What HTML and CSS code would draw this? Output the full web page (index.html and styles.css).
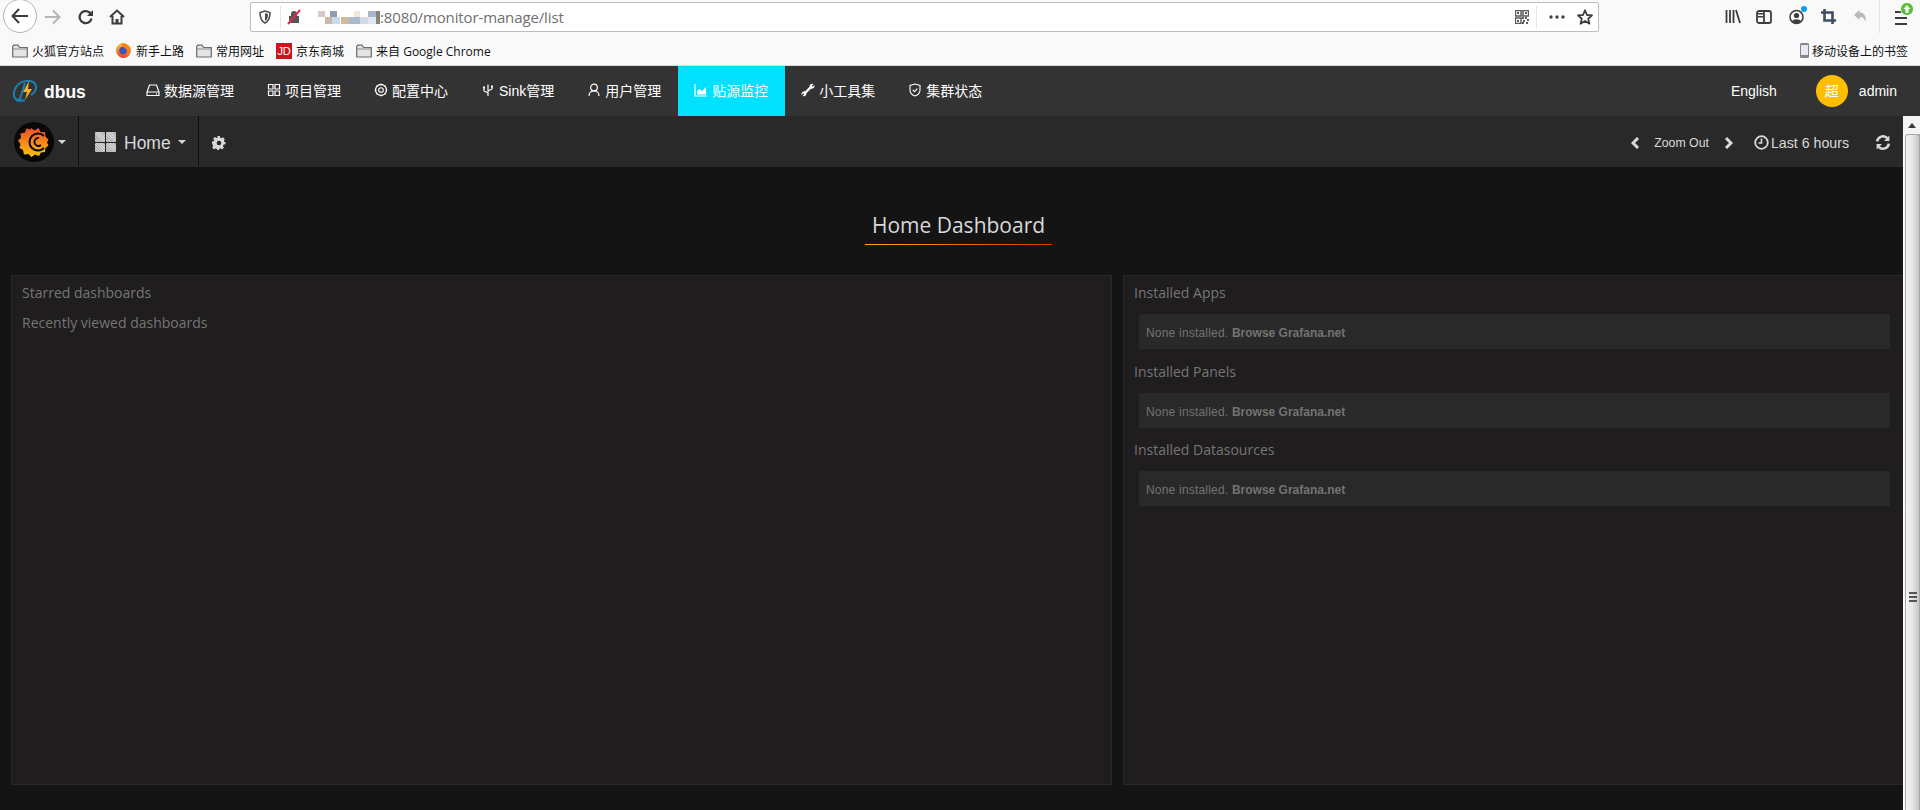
FILE: index.html
```html
<!DOCTYPE html>
<html lang="zh">
<head>
<meta charset="utf-8">
<title>dbus</title>
<link rel="stylesheet" href="styles.css">
</head>
<body>
<header class="chrome">
  <div class="toolbar">
    <button class="back"><svg width="18" height="16" viewBox="0 0 18 16"><path d="M8 1 1.500 8 8 15M2 8h15" fill="none" stroke="#3d3d3f" stroke-width="2"/></svg></button>
    <svg class="forward" width="17" height="16" viewBox="0 0 17 16"><path d="M9 1.500 15.500 8 9 14.500M15 8H1" fill="none" stroke="#b5b5b7" stroke-width="2"/></svg>
    <svg class="reload" width="16" height="16" viewBox="0 0 16 16"><path d="M13.500 9.500A6 6 0 1 1 11.500 3.500L14 5.500" fill="none" stroke="#3d3d3f" stroke-width="2.300"/><path d="M15 1v6H9z" fill="#3d3d3f"/></svg>
    <svg class="home" width="16" height="16" viewBox="0 0 16 16"><path d="M1 8 8 1.500 15 8M3.500 7v7.500h9V7" fill="none" stroke="#3d3d3f" stroke-width="2"/><path d="M6.500 10h3v5h-3z" fill="#3d3d3f"/></svg>
    <div class="urlbar">
      <svg class="shield" width="12" height="14" viewBox="0 0 12 14"><path d="M6 1 1 2.500C1 8 2 11 6 13c4-2 5-5 5-10.500z" fill="none" stroke="#505052" stroke-width="1.600"/><path d="M6 3v8c2-1 3-3 3-7z" fill="#505052"/></svg>
      <span class="url-div"></span>
      <svg class="lock" width="14" height="16" viewBox="0 0 14 16"><path d="M4 7V5a3 3 0 0 1 6 0v2h2v7H2V7z" fill="#555"/><path d="M1 15 13 1" stroke="#e22850" stroke-width="2"/></svg>
      <svg class="mosaic" width="62" height="13" viewBox="0 0 62 13"><rect width="7" height="6" fill="#d9c9c0"/><rect x="7" y="6" width="7" height="7" fill="#c9b8ab"/><rect x="12" width="7" height="6" fill="#8f9fb3"/><rect x="14" y="6" width="8" height="7" fill="#c6dde8"/><rect x="23" y="6" width="8" height="7" fill="#d2b9a0"/><rect x="31" y="6" width="11" height="7" fill="#a9bad0"/><rect x="36" width="6" height="6" fill="#f1e6d3"/><rect x="42" y="6" width="8" height="7" fill="#d3dce4"/><rect x="50" width="8" height="6" fill="#a6b6cc"/><rect x="50" y="6" width="8" height="7" fill="#dfe7ee"/><rect x="58" width="4" height="13" fill="#8a8478"/></svg>
      <span class="url-text">:8080/monitor-manage/list</span>
      <svg class="qr" width="14" height="14" viewBox="0 0 14 14"><path d="M0 0h6v6H0zM8 0h6v6H8zM0 8h6v6H0z" fill="none" stroke="#5b5b5d" stroke-width="1.600" transform="translate(.4 .4) scale(.94)"/><path d="M2 2h2v2H2zM10 2h2v2h-2zM2 10h2v2H2zM7 7h2v2H7zM10 7h2v2h-2zM12 9h2v2h-2zM8 10h2v2H8zM11 12h2v2h-2zM7 12h2v2H7z" fill="#5b5b5d"/></svg>
      <span class="url-div url-div-right"></span>
      <svg class="dots" width="16" height="4" viewBox="0 0 16 4"><circle cx="2" cy="2" r="1.700" fill="#444"/><circle cx="8" cy="2" r="1.700" fill="#444"/><circle cx="14" cy="2" r="1.700" fill="#444"/></svg>
      <svg class="star" width="16" height="16" viewBox="0 0 16 16"><path d="M8 1.300 10 6l5 .4-3.800 3.300 1.200 5L8 12l-4.400 2.700 1.200-5L1 6.400 6 6z" fill="none" stroke="#3d3d3f" stroke-width="1.800" stroke-linejoin="round"/></svg>
    </div>
    <svg class="library" width="16" height="15" viewBox="0 0 16 15"><path d="M1.500 1v13M5 1v13M8.500 1v13M11 1l4 13" stroke="#3d3d3f" stroke-width="1.800" fill="none"/></svg>
    <svg class="sidebar" width="16" height="14" viewBox="0 0 16 14"><rect x="1" y="1" width="14" height="12" rx="2" fill="none" stroke="#3d3d3f" stroke-width="1.800"/><path d="M8 1v12" stroke="#3d3d3f" stroke-width="1.800"/><path d="M2 3h5v1.500H2zM2 6h5v1.500H2z" fill="#3d3d3f"/></svg>
    <span class="account"><svg width="15" height="16" viewBox="0 0 15 16"><circle cx="7.500" cy="8" r="6.500" fill="none" stroke="#3d3d3f" stroke-width="1.500"/><circle cx="7.500" cy="6.500" r="2.600" fill="#3d3d3f"/><path d="M3 12.500c1-3 8-3 9 0-2 2-7 2-9 0z" fill="#3d3d3f"/></svg><i class="blue-dot"></i></span>
    <svg class="crop" width="15" height="15" viewBox="0 0 15 15"><path d="M3.500 0v11.500H15M0 3.500h11.500V15" fill="none" stroke="#3f4d5e" stroke-width="2.600"/></svg>
    <svg class="undo" width="15" height="15" viewBox="0 0 15 15"><path d="M6.500 1 1 6l5.500 5V8c3 0 5 1 6 5 1-6-1-9-6-9.500z" fill="#b8b8ba"/></svg>
    <span class="tb-div"></span>
    <span class="burger"><i></i><i></i><i></i><svg class="upd" width="14" height="14" viewBox="0 0 14 14"><circle cx="7" cy="7" r="6.500" fill="#57bd35" stroke="#f9f9fa"/><path d="M7 3 3.500 7h2v4h3V7h2z" fill="#fff"/></svg></span>
  </div>
  <div class="bookmarks">
    <span class="bm bm-first"><svg class="folder" width="16" height="14" viewBox="0 0 16 14"><use href="#folder-shape"/></svg>火狐官方站点</span>
    <span class="bm"><svg width="15" height="15" viewBox="0 0 15 15"><defs><linearGradient id="ff" x1="0" y1="0" x2="0" y2="1"><stop offset="0" stop-color="#ffcb2e"/><stop offset="1" stop-color="#e8412a"/></linearGradient></defs><circle cx="7.500" cy="7.500" r="7.500" fill="url(#ff)"/><circle cx="7" cy="7.500" r="3.800" fill="#3a55b8"/><path d="M5 .8c3-1 8 1 9 5 .5 3-1 7-4 8 2-2 2-5 .6-6.800C9.500 5 7 5 5 .8z" fill="#f4801f"/></svg>新手上路</span>
    <span class="bm"><svg class="folder" width="16" height="14" viewBox="0 0 16 14"><use href="#folder-shape"/></svg>常用网址</span>
    <span class="bm"><span class="jd">JD</span>京东商城</span>
    <span class="bm"><svg class="folder" width="16" height="14" viewBox="0 0 16 14"><use href="#folder-shape"/></svg>来自 Google Chrome</span>
    <span class="bm bm-right"><svg width="9" height="15" viewBox="0 0 9 15"><rect width="9" height="15" rx="1.500" fill="#7f8791"/><rect x="1" y="2" width="7" height="10" fill="#e8eaee"/></svg>移动设备上的书签</span>
  </div>
  <svg class="defs" width="0" height="0"><defs><g id="folder-shape"><path d="M.7 2.500V13h14.600V3.500H7.500L6 1.200H1.500z" fill="#e4e4e4" stroke="#6c6c6e" stroke-width="1.200"/><path d="M1 5h14" stroke="#8d8d8f"/></g></defs></svg>
</header>

<nav class="appbar">
  <div class="brand">
    <svg width="24" height="22" viewBox="0 0 24 22"><path d="M9 20.500C3 21 0 18 1 12 2 6 7 1.500 13 1c5-.5 9 1 10 5 .6 4-2 7-5 9" fill="none" stroke="#1b7fb4" stroke-width="2"/><path d="M12 3 7 19l-4 1.500h9" fill="none" stroke="#1b7fb4" stroke-width="2"/><path d="M16 1 10 12h4l-2 8 7-11h-4z" fill="#f2b322"/></svg>
    <span class="brand-name">dbus</span>
  </div>
  <a class="menu-item"><svg width="14" height="14" viewBox="0 0 14 14"><path d="M3.500 2h7l2.500 7v3.500H1V9zM1 9h12M10 10.800h1" fill="none" stroke="#fff" stroke-width="1.200"/></svg>数据源管理</a>
  <a class="menu-item"><svg width="14" height="14" viewBox="0 0 14 14"><path d="M1.500 1.500h4.500v4.500H1.500zM8 1.500h4.500v4.500H8zM1.500 8h4.500v4.500H1.500zM8 8h4.500v4.500H8z" fill="none" stroke="#fff" stroke-width="1.200"/></svg>项目管理</a>
  <a class="menu-item"><svg width="14" height="14" viewBox="0 0 14 14"><circle cx="7" cy="7" r="2.300" fill="none" stroke="#fff" stroke-width="1.100"/><circle cx="7" cy="7" r="5.500" fill="none" stroke="#fff" stroke-width="1.300"/><path d="M7 .8v1.500M7 11.700v1.500M.8 7h1.500M11.700 7h1.500M2.600 2.600l1 1M10.400 10.400l1 1M2.600 11.400l1-1M10.400 3.600l1-1" stroke="#fff"/></svg>配置中心</a>
  <a class="menu-item"><svg width="14" height="14" viewBox="0 0 14 14"><path d="M7 13V1.500M7 10 3 8V5M7 8l4-2V4" fill="none" stroke="#fff" stroke-width="1.200"/><path d="M2 3.500h2v2H2zM10 2.500h2v2h-2z" fill="#fff"/></svg>Sink管理</a>
  <a class="menu-item"><svg width="14" height="14" viewBox="0 0 14 14"><circle cx="7" cy="4.500" r="3.300" fill="none" stroke="#fff" stroke-width="1.200"/><path d="M2 13c0-3 2-5 5-5s5 2 5 5" fill="none" stroke="#fff" stroke-width="1.200"/></svg>用户管理</a>
  <a class="menu-item menu-active"><svg width="14" height="14" viewBox="0 0 14 14"><path d="M1 1v12h12" fill="none" stroke="#fff" stroke-width="1.200"/><path d="M3 11.500V8l2.500-2 2.500 2 4-4v7.500z" fill="#fff"/></svg>贴源监控</a>
  <a class="menu-item"><svg width="14" height="14" viewBox="0 0 14 14"><path d="M3 11 11 3" stroke="#fff" stroke-width="2.400"/><path d="M8.500 3a3 3 0 0 1 4-2L10.500 3l1 1 2-2a3 3 0 0 1-4 3.500zM5.500 11a3 3 0 0 1-4 2l2-2-1-1-2 2a3 3 0 0 1 4-3.500z" fill="#fff"/></svg>小工具集</a>
  <a class="menu-item"><svg width="14" height="14" viewBox="0 0 14 14"><path d="M7 1 2 2.500V7c0 3 2 5 5 6 3-1 5-3 5-6V2.500z" fill="none" stroke="#fff" stroke-width="1.100"/><path d="m4.800 7 1.700 1.700 2.800-3" fill="none" stroke="#fff" stroke-width="1.100"/></svg>集群状态</a>
  <span class="lang">English</span>
  <span class="avatar">超</span>
  <span class="user">admin</span>
</nav>

<div class="workspace">
  <div class="grafana">
    <div class="gf-nav">
      <div class="gf-logo-cell">
        <svg width="40" height="40" viewBox="0 0 40 40"><defs><linearGradient id="gf" x1="0" y1="0" x2="0" y2="1"><stop offset="0" stop-color="#ee4f28"/><stop offset="1" stop-color="#fbc30f"/></linearGradient></defs><circle cx="20" cy="20" r="20" fill="#080808"/><path d="M17 6l3.500 2.500 4-2.500 2 4 4.500.3.500 4.500 3 2.700-1.500 3 1.500 3-3 2.500-.5 4-4 .5-2 3.500-4-1.500-3.500 2.500-3-3-4.500.5-1-4.500-3.500-2 1-4-2.500-3.500 3-2.500-.5-4.500 4.500-1 1.500-4 4 1z" fill="url(#gf)"/><path d="M30 14A8.500 8.500 0 1 0 30 26" fill="none" stroke="#080808" stroke-width="2"/><path d="M27 23A4 4 0 1 1 25 16" fill="none" stroke="#080808" stroke-width="1.800"/></svg>
        <i class="caret"></i>
      </div>
      <div class="gf-home-cell">
        <span class="tiles"><i></i><i></i><i></i><i></i></span>
        <span class="home-label">Home</span>
        <i class="caret"></i>
      </div>
      <svg class="gear" width="14" height="14" viewBox="0 0 14 14"><path d="M5.600 0h2.800l.4 1.900 1.300.6L11.800 1.400l2 2-1.100 1.700.6 1.300L15 7l-.8 2-1.900.4-.6 1.300 1.100 1.700-2 2-1.700-1.100-1.300.6-.4 1.900H5.600l-.4-1.900-1.300-.6-1.700 1.100-2-2 1.100-1.700-.6-1.300L-.2 8V6l1.900-.4.600-1.300L1.200 2.600l2-1.600 1.700 1.100 1.300-.6z" fill="#d8d9da" transform="scale(.93)"/><circle cx="7" cy="7" r="2.300" fill="#292929"/></svg>
      <div class="gf-right">
        <svg class="chev" width="9" height="12" viewBox="0 0 9 12"><path d="M7 1 2 6l5 5" fill="none" stroke="#d8d9da" stroke-width="3"/></svg>
        <span class="zoom-out">Zoom Out</span>
        <svg class="chev chev-next" width="9" height="12" viewBox="0 0 9 12"><path d="m2 1 5 5-5 5" fill="none" stroke="#d8d9da" stroke-width="3"/></svg>
        <svg class="clock" width="15" height="15" viewBox="0 0 15 15"><circle cx="7.500" cy="7.500" r="6.300" fill="none" stroke="#d8d9da" stroke-width="1.800"/><path d="M7.500 3.500v4.500H4.500" fill="none" stroke="#d8d9da" stroke-width="1.600"/></svg>
        <span class="range">Last 6 hours</span>
        <svg class="refresh" width="16" height="15" viewBox="0 0 15 14"><path d="M2 6a5.500 5.500 0 0 1 9.500-3M13 8a5.500 5.500 0 0 1-9.500 3" fill="none" stroke="#d8d9da" stroke-width="2.400"/><path d="M13.500 .5v5h-5zM1.500 13.500v-5h5z" fill="#d8d9da"/></svg>
      </div>
    </div>
    <main class="board">
      <div class="title-row"><h1 class="title">Home Dashboard</h1></div>
      <div class="panels">
        <section class="panel panel-left">
          <h2 class="panel-head first">Starred dashboards</h2>
          <h2 class="panel-head second">Recently viewed dashboards</h2>
        </section>
        <section class="panel panel-right">
          <h2 class="panel-head first">Installed Apps</h2>
          <div class="empty-box">None installed. <b>Browse Grafana.net</b></div>
          <h2 class="panel-head">Installed Panels</h2>
          <div class="empty-box">None installed. <b>Browse Grafana.net</b></div>
          <h2 class="panel-head third">Installed Datasources</h2>
          <div class="empty-box">None installed. <b>Browse Grafana.net</b></div>
        </section>
      </div>
    </main>
  </div>
  <div class="scrollbar">
    <div class="sb-up"><i></i></div>
    <div class="sb-thumb"><span class="grip"><i></i><i></i><i></i></span></div>
  </div>
</div>
</body>
</html>
```

FILE: styles.css
```css
* { box-sizing: border-box; }
html, body { margin: 0; padding: 0; height: 810px; overflow: hidden; }
body { display: flex; flex-direction: column; background: #141414; font-family: "Liberation Sans", "Noto Sans CJK SC", sans-serif; }
svg { display: block; flex: none; }
i { display: block; }

/* browser chrome */
.chrome { height: 66px; background: #f9f9fa; border-bottom: 1px solid #dcdcdc; flex: none; }
.toolbar { height: 33px; display: flex; align-items: center; padding-left: 3px; }
.back { width: 34px; height: 34px; margin-top: -1px; border: 1px solid #b4b4b6; border-radius: 50%; background: #fff; padding: 0; display: flex; align-items: center; justify-content: center; }
.forward { margin-left: 7px; }
.reload { margin-left: 17px; }
.home { margin-left: 15px; }
.urlbar { width: 1349px; height: 30px; margin-left: 125px; margin-top: 1px; background: #fff; border: 1px solid #bdbdbd; border-radius: 2px; display: flex; align-items: center; padding-left: 8px; }
.url-div { width: 1px; height: 22px; background: #e6e6e6; margin-left: 9px; }
.lock { margin-left: 6px; }
.mosaic { margin-left: 17px; }
.url-text { margin-left: 0; font-size: 15px; color: #6f6f6f; font-family: "Open Sans", sans-serif; letter-spacing: -.13px; white-space: nowrap; }
.qr { margin-left: auto; }
.url-div-right { margin-left: 7px; }
.dots { margin-left: 12px; }
.star { margin-left: 12px; margin-right: 5px; }
.library { margin-left: 126px; }
.sidebar { margin-left: 15px; }
.account { position: relative; margin-left: 17px; display: block; }
.blue-dot { position: absolute; right: -3px; top: -3px; width: 6px; height: 6px; border-radius: 50%; background: #0a9df2; }
.crop { margin-left: 17px; }
.undo { margin-left: 17px; }
.tb-div { width: 1px; height: 33px; background: #e2e2e2; margin-left: 11px; }
.burger { position: relative; margin-left: 15px; width: 12px; display: flex; flex-direction: column; gap: 4px; margin-top: 3px; }
.burger i { height: 2px; background: #3d3d3f; }
.upd { position: absolute; left: 5px; top: -9px; }

.bookmarks { height: 32px; display: flex; align-items: center; padding-left: 12px; font-size: 12px; color: #111; padding-top: 3px; font-family: "Open Sans", "Noto Sans CJK SC", sans-serif; }
.bm { display: flex; align-items: center; gap: 5px; margin-right: 12px; white-space: nowrap; }
.bm-right { margin-left: auto; margin-right: 12px; gap: 3px; }
.folder { margin-right: -1px; }
.jd { width: 16px; height: 16px; background: #c9151e; color: #fff; font-size: 11px; text-align: center; line-height: 16px; letter-spacing: -.3px; font-family: "Liberation Sans", sans-serif; margin-right: -1px; }
.defs { position: absolute; }

/* app bar */
.appbar { height: 50px; flex: none; background: #333; display: flex; align-items: stretch; color: #fff; font-size: 14px; }
.brand { width: 130px; display: flex; align-items: center; padding-left: 13px; gap: 7px; }
.brand-name { font-size: 17.500px; font-weight: 700; margin-top: 2px; }
.menu-item { display: flex; align-items: center; gap: 4px; padding: 0 17px 2px 16px; white-space: nowrap; }
.menu-active { background: #00e0ff; }
.lang { margin-left: auto; align-self: center; }
.avatar { width: 32px; height: 32px; border-radius: 50%; background: #ffbf00; align-self: center; margin-left: 39px; text-align: center; line-height: 32px; }
.user { align-self: center; margin-left: 11px; margin-right: 23px; }

/* workspace */
.workspace { flex: 1; display: flex; min-height: 0; }
.grafana { flex: 1; min-width: 0; display: flex; flex-direction: column; }
.gf-nav { height: 51px; flex: none; background: #292929; display: flex; align-items: center; color: #d8d9da; }
.caret { width: 0; height: 0; border-left: 4px solid transparent; border-right: 4px solid transparent; border-top: 4px solid #d8d9da; }
.gf-logo-cell { width: 79px; height: 50px; border-right: 1px solid #0d0d0d; display: flex; align-items: center; padding: 2px 0 0 14px; gap: 4px; margin-bottom: 1px; }
.gf-home-cell { width: 120px; height: 50px; border-right: 1px solid #0d0d0d; display: flex; align-items: center; padding: 2px 0 0 16px; margin-bottom: 1px; }
.tiles { width: 21px; height: 20px; display: grid; grid-template-columns: 1fr 1fr; gap: 1px; }
.tiles i { background: repeating-linear-gradient(45deg, #b0b0b0 0 1px, #d4d4d4 1px 2px); border-radius: 1px; }
.home-label { font-size: 17.500px; margin: 2px 7px 0 8px; }
.gear { margin: 2px 0 0 13px; }
.gf-right { margin-left: auto; margin-top: 2px; display: flex; align-items: center; }
.zoom-out { font-size: 12.300px; margin-left: 14px; }
.chev-next { margin-left: 15px; }
.clock { margin-left: 21px; }
.range { font-size: 14.200px; margin-left: 2px; }
.refresh { margin-left: 26px; margin-right: 12px; }

.board { flex: 1; min-height: 0; padding-left: 11px; display: flex; flex-direction: column; }
.title-row { height: 108px; flex: none; padding-left: 3px; display: flex; justify-content: center; align-items: flex-start; }
.title { margin: 38px 0 0; padding-top: 7px; width: 187px; height: 40px; text-align: center; font-family: "Open Sans", sans-serif; font-weight: 400; font-size: 21px; line-height: 27px; color: #d8d9da; border-bottom: 1px solid; border-image: linear-gradient(90deg, #ffb400, #e02f00) 1; white-space: nowrap; }
.panels { height: 510px; display: flex; gap: 11px; }
.panel { background: #1f1d1e; border: 1px solid #292929; padding: 0 10px; }
.panel-left { width: 1101px; flex: none; }
.panel-right { flex: 1; border-right: none; padding-right: 13px; }
.panel-head { margin: 0; font-family: "Open Sans", sans-serif; font-weight: 400; font-size: 14px; line-height: 20px; color: #767676; height: 29px; padding-top: 7px; }
.panel-head.first { height: 36px; padding-top: 7px; }
.panel-head.second { padding-top: 1px; }
.panel-right .panel-head { height: 44px; padding-top: 13px; }
.panel-right .panel-head.first { height: 38px; padding-top: 7px; }
.panel-right .panel-head.third { height: 43px; padding-top: 12px; }
.empty-box { height: 35px; margin-left: 5px; background: #292929; padding-left: 7px; font-size: 12px; line-height: 38px; color: #737373; letter-spacing: .2px; overflow: hidden; }
.empty-box b { color: #737373; letter-spacing: 0; }

/* scrollbar */
.scrollbar { width: 17px; flex: none; background: linear-gradient(90deg, #fff 0 1px, #f2f2f2 2px, #d4d4d4 12px, #c8c8c8 15px, #9a9a9a 17px); display: flex; flex-direction: column; }
.sb-up { height: 18px; background: #f4f4f4; display: flex; align-items: center; justify-content: center; }
.sb-up i { width: 0; height: 0; border-left: 4px solid transparent; border-right: 4px solid transparent; border-bottom: 5px solid #3a3a3a; }
.sb-thumb { flex: 1; margin-left: 2px; border: 1px solid #a8a8a8; border-bottom: none; border-radius: 3px 3px 0 0; background: linear-gradient(90deg, #f4f4f4, #e6e6e6 50%, #c4c4c4); position: relative; }
.grip { position: absolute; left: 3px; top: 457px; width: 8px; height: 10px; display: flex; flex-direction: column; gap: 2px; }
.grip i { height: 2px; background: #555; }
```
